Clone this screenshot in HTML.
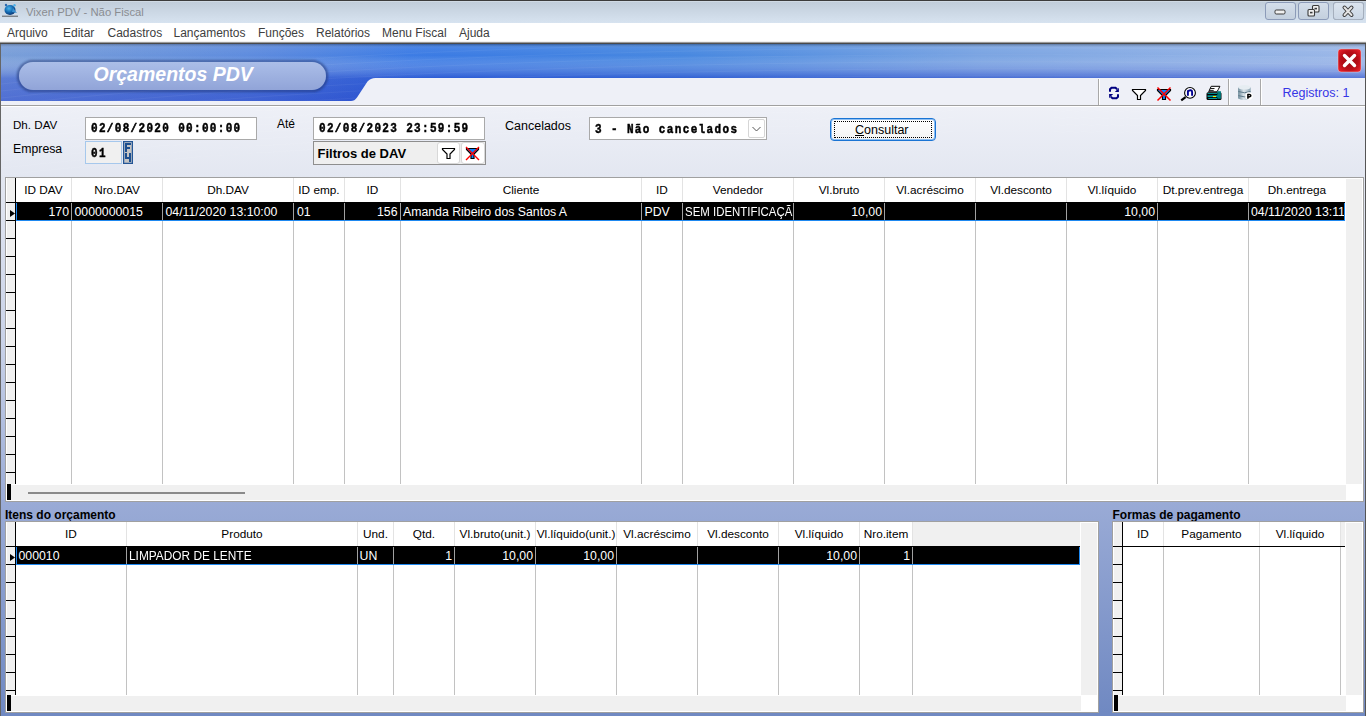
<!DOCTYPE html><html><head><meta charset="utf-8"><style>
html,body{margin:0;padding:0}
body{width:1366px;height:716px;overflow:hidden;position:relative;background:#eef0f7;font-family:"Liberation Sans",sans-serif}
.t{position:absolute;white-space:nowrap}
.b{position:absolute;box-sizing:border-box}
svg{position:absolute;overflow:visible}
</style></head><body>
<div class="b" style="left:0px;top:0px;width:1366px;height:23px;background:linear-gradient(#bfcbd8,#d7e3f0);"></div>
<div class="b" style="left:0px;top:0px;width:1366px;height:1px;background:#3c3c3c;"></div>
<div class="b" style="left:0px;top:1px;width:1366px;height:1px;background:#d0dae4;"></div>
<svg style="left:0;top:0" width="24" height="23" viewBox="0 0 24 23">
<defs><radialGradient id="gl" cx="0.4" cy="0.35" r="0.7"><stop offset="0" stop-color="#4ab4ea"/><stop offset="0.55" stop-color="#1268b0"/><stop offset="1" stop-color="#0a2f6a"/></radialGradient></defs>
<ellipse cx="10" cy="10" rx="5.5" ry="5" fill="url(#gl)"/>
<path d="M13 8 L17 13 L12 12 Z" fill="#3a90d0"/>
<circle cx="6" cy="5" r="1.2" fill="#2a6ab0"/><circle cx="14.5" cy="5.2" r="1.2" fill="#4ab0e8"/>
<rect x="2" y="15.6" width="16" height="1.3" fill="#444" opacity="0.65"/>
</svg>
<div class="t" style="left:26px;top:6.53px;font-size:11.3px;line-height:11.3px;font-weight:normal;font-style:normal;color:#8a8d92;font-family:'Liberation Sans', sans-serif;">Vixen PDV - Não Fiscal</div>
<div class="b" style="left:1265px;top:2px;width:31px;height:18px;border:1px solid #8c9bb8;border-radius:3px;background:linear-gradient(#d4deea,#c4d0de);"></div>
<div class="b" style="left:1298px;top:2px;width:31px;height:18px;border:1px solid #8c9bb8;border-radius:3px;background:linear-gradient(#d4deea,#c4d0de);"></div>
<div class="b" style="left:1333px;top:2px;width:31px;height:18px;border:1px solid #8c9bb8;border-radius:3px;background:linear-gradient(#d4deea,#c4d0de);"></div>
<div class="b" style="left:1333px;top:2px;width:31px;height:18px;border:1px solid #a5afbd;border-radius:3px;background:linear-gradient(#dbe4ee,#cbd7e5);"></div>
<svg style="left:1265px;top:2px" width="100" height="18" viewBox="0 0 100 18">
<rect x="10" y="8" width="10" height="4" rx="1.2" fill="#f0f0f0" stroke="#3a3a3a" stroke-width="1"/>
<rect x="47.5" y="3.5" width="6.5" height="6.5" rx="1" fill="#f0f0f0" stroke="#3a3a3a" stroke-width="1.1"/>
<rect x="49.5" y="5.8" width="2.5" height="1.6" fill="#3a3a3a"/>
<rect x="43" y="7.5" width="6.5" height="6.5" rx="1" fill="#f0f0f0" stroke="#3a3a3a" stroke-width="1.1"/>
<rect x="45" y="9.8" width="2.5" height="1.6" fill="#3a3a3a"/>
<path d="M79.5 5.5 L86.5 13 M86.5 5.5 L79.5 13" stroke="#3a3a3a" stroke-width="4" stroke-linecap="round"/>
<path d="M79.5 5.5 L86.5 13 M86.5 5.5 L79.5 13" stroke="#e4e4e4" stroke-width="2" stroke-linecap="round"/>
</svg>
<div class="b" style="left:0px;top:23px;width:1366px;height:19px;background:#ffffff;"></div>
<div class="b" style="left:0px;top:41px;width:1366px;height:1px;background:#f0f0f0;"></div>
<div class="b" style="left:0px;top:42px;width:1366px;height:1px;background:#9a9a9a;"></div>
<div class="b" style="left:0px;top:43px;width:1366px;height:1px;background:#4a4a4a;"></div>
<div class="t" style="left:7px;top:27.24px;font-size:12px;line-height:12px;font-weight:normal;font-style:normal;color:#404040;font-family:'Liberation Sans', sans-serif;">Arquivo</div>
<div class="t" style="left:63px;top:27.24px;font-size:12px;line-height:12px;font-weight:normal;font-style:normal;color:#404040;font-family:'Liberation Sans', sans-serif;">Editar</div>
<div class="t" style="left:107.5px;top:27.24px;font-size:12px;line-height:12px;font-weight:normal;font-style:normal;color:#404040;font-family:'Liberation Sans', sans-serif;">Cadastros</div>
<div class="t" style="left:173.5px;top:27.24px;font-size:12px;line-height:12px;font-weight:normal;font-style:normal;color:#404040;font-family:'Liberation Sans', sans-serif;">Lançamentos</div>
<div class="t" style="left:258px;top:27.24px;font-size:12px;line-height:12px;font-weight:normal;font-style:normal;color:#404040;font-family:'Liberation Sans', sans-serif;">Funções</div>
<div class="t" style="left:316px;top:27.24px;font-size:12px;line-height:12px;font-weight:normal;font-style:normal;color:#404040;font-family:'Liberation Sans', sans-serif;">Relatórios</div>
<div class="t" style="left:382px;top:27.24px;font-size:12px;line-height:12px;font-weight:normal;font-style:normal;color:#404040;font-family:'Liberation Sans', sans-serif;">Menu Fiscal</div>
<div class="t" style="left:459px;top:27.24px;font-size:12px;line-height:12px;font-weight:normal;font-style:normal;color:#404040;font-family:'Liberation Sans', sans-serif;">Ajuda</div>
<div class="b" style="left:0px;top:44px;width:1366px;height:672px;background:linear-gradient(#eef0f7 0px,#eef0f7 62px,#e3e7f1 133px,#c9d2e8 300px,#9aabd6 457px,#7089c2 668px);"></div>
<div class="b" style="left:0px;top:44px;width:1px;height:672px;background:#666;"></div>
<div class="b" style="left:1365px;top:44px;width:1px;height:672px;background:#555;"></div>
<svg style="left:1px;top:44px" width="1364" height="62" viewBox="0 0 1364 62">
<defs>
<linearGradient id="bh" x1="0" y1="0" x2="1" y2="0">
<stop offset="0" stop-color="#6490d2"/><stop offset="0.2" stop-color="#4a7edc"/><stop offset="0.3" stop-color="#3a7ae4"/><stop offset="0.5" stop-color="#4888e0"/><stop offset="0.72" stop-color="#7aa4e2"/><stop offset="1" stop-color="#9cb8e8"/></linearGradient>
<linearGradient id="bv" x1="0" y1="0" x2="0" y2="1">
<stop offset="0" stop-color="#000" stop-opacity="0.30"/><stop offset="0.07" stop-color="#fff" stop-opacity="0.06"/><stop offset="0.2" stop-color="#fff" stop-opacity="0"/><stop offset="0.6" stop-color="#1c3ec8" stop-opacity="0.55"/><stop offset="1" stop-color="#1c3ec8" stop-opacity="0.75"/></linearGradient>
<linearGradient id="pill" x1="0" y1="0" x2="0" y2="1"><stop offset="0" stop-color="#abbee8"/><stop offset="1" stop-color="#91a4d8"/></linearGradient>
<filter id="sh2" x="-5%" y="-30%" width="110%" height="160%"><feGaussianBlur stdDeviation="0.9"/></filter>
</defs>
<rect x="0" y="0" width="1364" height="57" fill="url(#bh)"/>
<rect x="0" y="0" width="1364" height="57" fill="url(#bv)"/>
<linearGradient id="bl" x1="0" y1="0" x2="1" y2="0"><stop offset="0" stop-color="#c8d4f0" stop-opacity="0.22"/><stop offset="0.18" stop-color="#c8d4f0" stop-opacity="0.15"/><stop offset="0.32" stop-color="#c8d4f0" stop-opacity="0"/></linearGradient>
<rect x="0" y="0" width="1364" height="57" fill="url(#bl)"/>
<path d="M0 40 Q 500 -15 1364 0" stroke="#fff" stroke-opacity="0.05" fill="none" stroke-width="1"/>
<path d="M0 47 Q 500 -8 1364 7" stroke="#fff" stroke-opacity="0.05" fill="none" stroke-width="1"/>
<path d="M0 54 Q 500 -1 1364 14" stroke="#fff" stroke-opacity="0.05" fill="none" stroke-width="1"/>
<path d="M0 61 Q 500 6 1364 21" stroke="#fff" stroke-opacity="0.05" fill="none" stroke-width="1"/>
<path d="M0 68 Q 500 13 1364 28" stroke="#fff" stroke-opacity="0.05" fill="none" stroke-width="1"/>
<path d="M0 75 Q 500 20 1364 35" stroke="#fff" stroke-opacity="0.05" fill="none" stroke-width="1"/>
<path d="M0 82 Q 500 27 1364 42" stroke="#fff" stroke-opacity="0.05" fill="none" stroke-width="1"/>
<path d="M0 89 Q 500 34 1364 49" stroke="#fff" stroke-opacity="0.05" fill="none" stroke-width="1"/>
<path d="M0 96 Q 500 41 1364 56" stroke="#fff" stroke-opacity="0.05" fill="none" stroke-width="1"/>
<path d="M0 103 Q 500 48 1364 63" stroke="#fff" stroke-opacity="0.05" fill="none" stroke-width="1"/>
<path d="M0 110 Q 500 55 1364 70" stroke="#fff" stroke-opacity="0.05" fill="none" stroke-width="1"/>
<path d="M0 117 Q 500 62 1364 77" stroke="#fff" stroke-opacity="0.05" fill="none" stroke-width="1"/>
<path d="M0 124 Q 500 69 1364 84" stroke="#fff" stroke-opacity="0.05" fill="none" stroke-width="1"/>
<path d="M0 131 Q 500 76 1364 91" stroke="#fff" stroke-opacity="0.05" fill="none" stroke-width="1"/>
<rect x="17.2" y="17.2" width="308.6" height="29.6" rx="14.8" fill="none" stroke="#1a3270" stroke-width="2.6" opacity="0.6" filter="url(#sh2)"/>
<rect x="18" y="18" width="307" height="28" rx="14" fill="url(#pill)"/>
<path d="M0 57 L350 57 Q353.5 57 356 53.5 L366.5 37.5 Q369.5 34 374.5 34 L1364 34 L1364 62 L0 62 Z" fill="#eef0f7"/>
</svg>
<div class="t" style="left:93.5px;top:65.09px;font-size:19.5px;line-height:19.5px;font-weight:bold;font-style:italic;color:#ffffff;font-family:'Liberation Sans', sans-serif;">Orçamentos PDV</div>
<svg style="left:1338px;top:49px" width="23" height="23" viewBox="0 0 23 23">
<defs><radialGradient id="rg" cx="0.5" cy="0.5" r="0.62"><stop offset="0" stop-color="#9a0a12"/><stop offset="0.6" stop-color="#b80e18"/><stop offset="1" stop-color="#e8202a"/></radialGradient></defs>
<rect x="0" y="0" width="23" height="23" rx="3" fill="url(#rg)" stroke="#f0d0d0" stroke-opacity="0.6" stroke-width="0.8"/>
<path d="M6.5 6.5 L16.5 16.5 M16.5 6.5 L6.5 16.5" stroke="#fff" stroke-width="3.4" stroke-linecap="round"/>
</svg>
<div class="b" style="left:1px;top:105px;width:1364px;height:1px;background:#a0a0a0;"></div>
<div class="b" style="left:1px;top:106px;width:1364px;height:1px;background:#ffffff;"></div>
<div class="b" style="left:1098px;top:79px;width:1px;height:26px;background:#a8a8a8;"></div>
<div class="b" style="left:1099px;top:79px;width:1px;height:26px;background:#ffffff;"></div>
<div class="b" style="left:1228px;top:79px;width:1px;height:26px;background:#a8a8a8;"></div>
<div class="b" style="left:1229px;top:79px;width:1px;height:26px;background:#ffffff;"></div>
<div class="b" style="left:1260px;top:79px;width:1px;height:26px;background:#a8a8a8;"></div>
<div class="b" style="left:1261px;top:79px;width:1px;height:26px;background:#ffffff;"></div>
<svg style="left:1100px;top:80px" width="160" height="24" viewBox="0 0 160 24">
<polyline points="10,11.8 10,9.2 11.5,7.7 15.5,7.7 17.2,9.2" fill="none" stroke="#000080" stroke-width="2"/>
<polygon points="18.9,7.8 18.9,11.9 14.9,11.9" fill="#000080"/>
<polyline points="18,14.2 18,16.8 16.5,18.3 12.5,18.3 10.8,16.8" fill="none" stroke="#000080" stroke-width="2"/>
<polygon points="9.1,18.2 9.1,14.1 13.1,14.1" fill="#000080"/>
<path d="M32.5 9.5 L45.5 9.5 L45.5 10.5 L40.5 15.5 L40.5 19.5 L37.5 19.5 L37.5 15.5 L32.5 10.5 Z" fill="#fff" stroke="#000" stroke-width="1.2"/>
<path d="M57.5 9.5 L70.5 9.5 L70.5 10.5 L65.5 15.5 L65.5 19.5 L62.5 19.5 L62.5 15.5 L57.5 10.5 Z" fill="#0a84ff" stroke="#000" stroke-width="1.2"/>
<path d="M57.5 7.5 L70.5 20.5 M70.5 7.5 L57.5 20.5" stroke="#ff0000" stroke-width="1.5"/>
<circle cx="90" cy="12.9" r="5.4" fill="#fff" stroke="#000" stroke-width="1.1"/>
<path d="M87.9 15.8 L87.9 10.2 M87.9 11.5 Q89 10 90.8 10.2 Q92.1 10.4 92.1 12 L92.1 15.8" fill="none" stroke="#000090" stroke-width="1.9"/>
<path d="M85.6 17.1 L81.2 20.4" stroke="#000" stroke-width="2.2"/>
<g transform="translate(100,0)"><rect x="6.5" y="12.2" width="15" height="7.8" rx="1.5" fill="#000"/>
<polygon points="11.2,6.3 19.9,6.3 18.3,9.5 17,11.8 8.7,11.8" fill="#fff" stroke="#000" stroke-width="1"/>
<path d="M10.3 8.5 L14.5 8.5 M9.5 10.4 L13.7 10.4" stroke="#000" stroke-width="0.9"/>
<rect x="7.5" y="13" width="9.5" height="0.9" fill="#009a9a"/>
<rect x="7.5" y="15.3" width="10.5" height="1.8" fill="#009a9a"/>
<rect x="8.3" y="18" width="8.7" height="1" fill="#009a9a"/>
<rect x="17.3" y="11.2" width="3.6" height="7.6" fill="#007a7a"/>
<rect x="12.9" y="16" width="3.1" height="1.1" fill="#ffee00"/>
<defs><linearGradient id="dbg" x1="0" y1="0" x2="1" y2="0"><stop offset="0" stop-color="#6f8c9c"/><stop offset="0.45" stop-color="#dbe4ea"/><stop offset="1" stop-color="#8ea6b4"/></linearGradient></defs>
<path d="M38.1 7.3 L38.1 18.5 Q44.4 21.6 50.7 18.5 L50.7 7.3 Z" fill="url(#dbg)"/>
<ellipse cx="44.4" cy="7.3" rx="6.3" ry="2.3" fill="#e6edf2"/>
<path d="M38.3 11.5 Q44.4 14 50.5 11.5 M38.3 15.6 Q44.4 18.1 50.5 15.6" stroke="#5d7888" stroke-width="1" fill="none"/>
<circle cx="49" cy="16.1" r="3.8" fill="#fff"/>
<path d="M47.9 18.8 L47.9 14.6 Q50.6 14.1 50.8 15.6 Q50.8 17 48.5 17" fill="none" stroke="#000" stroke-width="1.5"/></g>
</svg>
<div class="t" style="left:1282.5px;top:87.18px;font-size:12.55px;line-height:12.55px;font-weight:normal;font-style:normal;color:#3535e6;font-family:'Liberation Sans', sans-serif;">Registros: 1</div>
<div class="t" style="left:13px;top:119.28px;font-size:11.6px;line-height:11.6px;font-weight:normal;font-style:normal;color:#000;font-family:'Liberation Sans', sans-serif;">Dh. DAV</div>
<div class="t" style="left:13px;top:142.79px;font-size:12.3px;line-height:12.3px;font-weight:normal;font-style:normal;color:#000;font-family:'Liberation Sans', sans-serif;">Empresa</div>
<div class="t" style="left:277px;top:118.44px;font-size:12px;line-height:12px;font-weight:normal;font-style:normal;color:#000;font-family:'Liberation Sans', sans-serif;">Até</div>
<div class="t" style="left:505px;top:120.22px;font-size:12.5px;line-height:12.5px;font-weight:normal;font-style:normal;color:#000;font-family:'Liberation Sans', sans-serif;">Cancelados</div>
<div class="b" style="left:85px;top:117px;width:172px;height:23px;background:#fff;border:1px solid #a9a9a9;"></div>
<div class="t" style="left:91px;top:124.47px;font-size:11px;line-height:11px;font-weight:bold;font-family:'Liberation Mono',monospace;letter-spacing:1.320px;transform:scaleY(1.24);transform-origin:0 8.43px;color:#000;-webkit-text-stroke:0.4px #000">02/08/2020 00:00:00</div>
<div class="b" style="left:313px;top:117px;width:172px;height:23px;background:#fff;border:1px solid #a9a9a9;"></div>
<div class="t" style="left:319px;top:124.47px;font-size:11px;line-height:11px;font-weight:bold;font-family:'Liberation Mono',monospace;letter-spacing:1.320px;transform:scaleY(1.24);transform-origin:0 8.43px;color:#000;-webkit-text-stroke:0.4px #000">02/08/2023 23:59:59</div>
<div class="b" style="left:85px;top:141px;width:37px;height:23px;background:#f0f0f0;border:1px solid #a6c8ec;"></div>
<div class="t" style="left:91px;top:148.77px;font-size:11px;line-height:11px;font-weight:bold;font-family:'Liberation Mono',monospace;letter-spacing:1.320px;transform:scaleY(1.24);transform-origin:0 8.43px;color:#000;-webkit-text-stroke:0.4px #000">01</div>
<div class="b" style="left:123px;top:141px;width:10px;height:23px;background:#c8c8c8;border:1px solid #1a4a8a;"></div>
<svg style="left:123px;top:141px" width="10" height="23" viewBox="0 0 10 23"><rect x="0.5" y="0.5" width="9" height="22" fill="#c4c4c4" stroke="#1c4f8f"/><rect x="1" y="1" width="8" height="21" fill="none" stroke="#3a6aa8" stroke-width="0.6"/><path d="M2 2 H8 V4 H4 V6 H7 V8 H4 V11 H2 Z" fill="#1c4f8f"/><path d="M2 12 H4 V16 H6 V12 H8 V21 H6 V18 H2 Z" fill="#1c4f8f"/></svg>
<div class="b" style="left:313px;top:141px;width:173px;height:24px;background:#efefef;border:1px solid #8e8e8e;"></div>
<div class="t" style="left:317.5px;top:147.00px;font-size:13px;line-height:13px;font-weight:bold;font-style:normal;color:#000;font-family:'Liberation Sans', sans-serif;">Filtros de DAV</div>
<div class="b" style="left:437px;top:142px;width:23px;height:22px;background:#fff;border:1px solid #d8d8d8;border-radius:3px;"></div>
<div class="b" style="left:461px;top:142px;width:24px;height:22px;background:#fff;border:1px solid #d8d8d8;border-radius:3px;"></div>
<svg style="left:437px;top:142px" width="48" height="22" viewBox="0 0 48 22">
<path d="M5.5 6.5 L17.5 6.5 L17.5 7.5 L13 12 L13 16.5 L10 16.5 L10 12 L5.5 7.5 Z" fill="#fff" stroke="#000" stroke-width="1.2"/>
<path d="M29.5 6.5 L41.5 6.5 L41.5 7.5 L37 12 L37 16.5 L34 16.5 L34 12 L29.5 7.5 Z" fill="#0a84ff" stroke="#000" stroke-width="1.2"/>
<path d="M29 5 L42 18 M42 5 L29 18" stroke="#ff0000" stroke-width="1.4"/>
</svg>
<div class="b" style="left:589px;top:117px;width:178px;height:23px;background:#fff;border:1px solid #a9a9a9;"></div>
<div class="t" style="left:595px;top:125.17px;font-size:11px;line-height:11px;font-weight:bold;font-family:'Liberation Mono',monospace;letter-spacing:1.370px;transform:scaleY(1.24);transform-origin:0 8.43px;color:#000;-webkit-text-stroke:0.4px #000">3 - Não cancelados</div>
<div class="b" style="left:748px;top:119px;width:17px;height:19px;background:#fff;border:1px solid #d6d6d6;border-radius:2px;"></div>
<svg style="left:748px;top:119px" width="17" height="19" viewBox="0 0 17 19"><path d="M4.5 8 L8.5 12 L12.5 8" fill="none" stroke="#555" stroke-width="1"/></svg>
<div class="b" style="left:830px;top:118px;width:106px;height:23px;background:linear-gradient(#ffffff,#f4f4f4);border:1px solid #1a74d4;border-radius:4px;box-shadow:inset 0 0 0 1px rgba(70,150,235,0.6);"></div>
<div class="b" style="left:834px;top:121px;width:98px;height:17px;border:1px dotted #000;"></div>
<div class="t" style="left:855px;top:124.22px;font-size:12.5px;line-height:12.5px;font-weight:normal;font-style:normal;color:#000;font-family:'Liberation Sans', sans-serif;"><u>C</u>onsultar</div>
<div class="b" style="left:5px;top:177px;width:1359px;height:325px;background:#fff;border:1px solid #a0a0a0;"></div>
<div class="b" style="left:6px;top:178px;width:1px;height:306px;background:#fff;"></div>
<div class="b" style="left:7px;top:178px;width:8px;height:306px;background:#f0f0f0;"></div>
<div class="b" style="left:15px;top:178px;width:1px;height:306px;background:#000;"></div>
<div class="b" style="left:6px;top:202px;width:10px;height:1px;background:#000;"></div>
<div class="b" style="left:6px;top:220px;width:10px;height:1px;background:#000;"></div>
<div class="b" style="left:6px;top:238px;width:10px;height:1px;background:#000;"></div>
<div class="b" style="left:6px;top:256px;width:10px;height:1px;background:#000;"></div>
<div class="b" style="left:6px;top:274px;width:10px;height:1px;background:#000;"></div>
<div class="b" style="left:6px;top:292px;width:10px;height:1px;background:#000;"></div>
<div class="b" style="left:6px;top:310px;width:10px;height:1px;background:#000;"></div>
<div class="b" style="left:6px;top:328px;width:10px;height:1px;background:#000;"></div>
<div class="b" style="left:6px;top:346px;width:10px;height:1px;background:#000;"></div>
<div class="b" style="left:6px;top:364px;width:10px;height:1px;background:#000;"></div>
<div class="b" style="left:6px;top:382px;width:10px;height:1px;background:#000;"></div>
<div class="b" style="left:6px;top:400px;width:10px;height:1px;background:#000;"></div>
<div class="b" style="left:6px;top:418px;width:10px;height:1px;background:#000;"></div>
<div class="b" style="left:6px;top:436px;width:10px;height:1px;background:#000;"></div>
<div class="b" style="left:6px;top:454px;width:10px;height:1px;background:#000;"></div>
<div class="b" style="left:6px;top:472px;width:10px;height:1px;background:#000;"></div>
<div class="b" style="left:71px;top:178px;width:1px;height:24px;background:#e3e3e3;"></div>
<div class="b" style="left:71px;top:202px;width:1px;height:282px;background:#c2c2c2;"></div>
<div class="b" style="left:162px;top:178px;width:1px;height:24px;background:#e3e3e3;"></div>
<div class="b" style="left:162px;top:202px;width:1px;height:282px;background:#c2c2c2;"></div>
<div class="b" style="left:293px;top:178px;width:1px;height:24px;background:#e3e3e3;"></div>
<div class="b" style="left:293px;top:202px;width:1px;height:282px;background:#c2c2c2;"></div>
<div class="b" style="left:344px;top:178px;width:1px;height:24px;background:#e3e3e3;"></div>
<div class="b" style="left:344px;top:202px;width:1px;height:282px;background:#c2c2c2;"></div>
<div class="b" style="left:400px;top:178px;width:1px;height:24px;background:#e3e3e3;"></div>
<div class="b" style="left:400px;top:202px;width:1px;height:282px;background:#c2c2c2;"></div>
<div class="b" style="left:641px;top:178px;width:1px;height:24px;background:#e3e3e3;"></div>
<div class="b" style="left:641px;top:202px;width:1px;height:282px;background:#c2c2c2;"></div>
<div class="b" style="left:682px;top:178px;width:1px;height:24px;background:#e3e3e3;"></div>
<div class="b" style="left:682px;top:202px;width:1px;height:282px;background:#c2c2c2;"></div>
<div class="b" style="left:793px;top:178px;width:1px;height:24px;background:#e3e3e3;"></div>
<div class="b" style="left:793px;top:202px;width:1px;height:282px;background:#c2c2c2;"></div>
<div class="b" style="left:884px;top:178px;width:1px;height:24px;background:#e3e3e3;"></div>
<div class="b" style="left:884px;top:202px;width:1px;height:282px;background:#c2c2c2;"></div>
<div class="b" style="left:975px;top:178px;width:1px;height:24px;background:#e3e3e3;"></div>
<div class="b" style="left:975px;top:202px;width:1px;height:282px;background:#c2c2c2;"></div>
<div class="b" style="left:1066px;top:178px;width:1px;height:24px;background:#e3e3e3;"></div>
<div class="b" style="left:1066px;top:202px;width:1px;height:282px;background:#c2c2c2;"></div>
<div class="b" style="left:1157px;top:178px;width:1px;height:24px;background:#e3e3e3;"></div>
<div class="b" style="left:1157px;top:202px;width:1px;height:282px;background:#c2c2c2;"></div>
<div class="b" style="left:1248px;top:178px;width:1px;height:24px;background:#e3e3e3;"></div>
<div class="b" style="left:1248px;top:202px;width:1px;height:282px;background:#c2c2c2;"></div>
<div class="t" style="left:16px;width:55px;top:184.51px;font-size:11.8px;line-height:11.8px;font-weight:normal;color:#000;text-align:center">ID DAV</div>
<div class="t" style="left:72px;width:90px;top:184.51px;font-size:11.8px;line-height:11.8px;font-weight:normal;color:#000;text-align:center">Nro.DAV</div>
<div class="t" style="left:163px;width:130px;top:184.51px;font-size:11.8px;line-height:11.8px;font-weight:normal;color:#000;text-align:center">Dh.DAV</div>
<div class="t" style="left:294px;width:50px;top:184.51px;font-size:11.8px;line-height:11.8px;font-weight:normal;color:#000;text-align:center">ID emp.</div>
<div class="t" style="left:345px;width:55px;top:184.51px;font-size:11.8px;line-height:11.8px;font-weight:normal;color:#000;text-align:center">ID</div>
<div class="t" style="left:401px;width:240px;top:184.51px;font-size:11.8px;line-height:11.8px;font-weight:normal;color:#000;text-align:center">Cliente</div>
<div class="t" style="left:642px;width:40px;top:184.51px;font-size:11.8px;line-height:11.8px;font-weight:normal;color:#000;text-align:center">ID</div>
<div class="t" style="left:683px;width:110px;top:184.51px;font-size:11.8px;line-height:11.8px;font-weight:normal;color:#000;text-align:center">Vendedor</div>
<div class="t" style="left:794px;width:90px;top:184.51px;font-size:11.8px;line-height:11.8px;font-weight:normal;color:#000;text-align:center">Vl.bruto</div>
<div class="t" style="left:885px;width:90px;top:184.51px;font-size:11.8px;line-height:11.8px;font-weight:normal;color:#000;text-align:center">Vl.acréscimo</div>
<div class="t" style="left:976px;width:90px;top:184.51px;font-size:11.8px;line-height:11.8px;font-weight:normal;color:#000;text-align:center">Vl.desconto</div>
<div class="t" style="left:1067px;width:90px;top:184.51px;font-size:11.8px;line-height:11.8px;font-weight:normal;color:#000;text-align:center">Vl.líquido</div>
<div class="t" style="left:1158px;width:90px;top:184.51px;font-size:11.8px;line-height:11.8px;font-weight:normal;color:#000;text-align:center">Dt.prev.entrega</div>
<div class="t" style="left:1249px;width:96px;top:184.51px;font-size:11.8px;line-height:11.8px;font-weight:normal;color:#000;text-align:center">Dh.entrega</div>
<div class="b" style="left:1346px;top:179px;width:16px;height:305px;background:#f0f0f0;"></div>
<div class="b" style="left:7px;top:485px;width:1339px;height:15px;background:#f0f0f0;"></div>
<div class="b" style="left:7px;top:484px;width:4px;height:16px;background:#000;"></div>
<div class="b" style="left:28px;top:492px;width:217px;height:2px;background:#8a8a8a;"></div>
<div class="b" style="left:15px;top:202px;width:1330px;height:18px;background:#000;"></div>
<div class="b" style="left:16px;top:220px;width:1329px;height:1px;background:#1e88f0;"></div>
<div class="b" style="left:16px;top:203px;width:1px;height:18px;background:#1e88f0;"></div>
<div class="b" style="left:1344px;top:203px;width:1px;height:18px;background:#1e88f0;"></div>
<div class="t" style="right:1297px;top:206.29px;font-size:12.3px;line-height:12.3px;font-weight:normal;color:#fff;text-align:right">170</div>
<div class="t" style="left:74.5px;top:206.29px;font-size:12.3px;line-height:12.3px;font-weight:normal;font-style:normal;color:#fff;font-family:'Liberation Sans', sans-serif;">0000000015</div>
<div class="t" style="left:165.5px;top:206.29px;font-size:12.3px;line-height:12.3px;font-weight:normal;font-style:normal;color:#fff;font-family:'Liberation Sans', sans-serif;">04/11/2020 13:10:00</div>
<div class="t" style="left:297px;top:206.29px;font-size:12.3px;line-height:12.3px;font-weight:normal;font-style:normal;color:#fff;font-family:'Liberation Sans', sans-serif;">01</div>
<div class="t" style="right:968.5px;top:206.29px;font-size:12.3px;line-height:12.3px;font-weight:normal;color:#fff;text-align:right">156</div>
<div class="t" style="left:403px;top:206.29px;font-size:12.3px;line-height:12.3px;font-weight:normal;font-style:normal;color:#fff;font-family:'Liberation Sans', sans-serif;">Amanda Ribeiro dos Santos A</div>
<div class="t" style="left:644.5px;top:206.29px;font-size:12.3px;line-height:12.3px;font-weight:normal;font-style:normal;color:#fff;font-family:'Liberation Sans', sans-serif;">PDV</div>
<div class="t" style="left:685px;top:202.29px;padding-top:4px;height:16.3px;width:108px;overflow:hidden;font-size:12.3px;line-height:12.3px;color:#fff"><span style="display:inline-block;transform:scaleX(0.93);transform-origin:0 0">SEM IDENTIFICAÇÃO</span></div>
<div class="t" style="right:484px;top:206.29px;font-size:12.3px;line-height:12.3px;font-weight:normal;color:#fff;text-align:right">10,00</div>
<div class="t" style="right:211px;top:206.29px;font-size:12.3px;line-height:12.3px;font-weight:normal;color:#fff;text-align:right">10,00</div>
<div class="t" style="left:1251px;top:202.29px;padding-top:4px;height:16.3px;width:93px;overflow:hidden;font-size:12.3px;line-height:12.3px;color:#fff"><span style="display:inline-block;transform:scaleX(1);transform-origin:0 0">04/11/2020 13:11:00</span></div>
<div class="b" style="left:71px;top:203px;width:1px;height:17px;background:#a0a0a0;"></div>
<div class="b" style="left:162px;top:203px;width:1px;height:17px;background:#a0a0a0;"></div>
<div class="b" style="left:293px;top:203px;width:1px;height:17px;background:#a0a0a0;"></div>
<div class="b" style="left:344px;top:203px;width:1px;height:17px;background:#a0a0a0;"></div>
<div class="b" style="left:400px;top:203px;width:1px;height:17px;background:#a0a0a0;"></div>
<div class="b" style="left:641px;top:203px;width:1px;height:17px;background:#a0a0a0;"></div>
<div class="b" style="left:682px;top:203px;width:1px;height:17px;background:#a0a0a0;"></div>
<div class="b" style="left:793px;top:203px;width:1px;height:17px;background:#a0a0a0;"></div>
<div class="b" style="left:884px;top:203px;width:1px;height:17px;background:#a0a0a0;"></div>
<div class="b" style="left:975px;top:203px;width:1px;height:17px;background:#a0a0a0;"></div>
<div class="b" style="left:1066px;top:203px;width:1px;height:17px;background:#a0a0a0;"></div>
<div class="b" style="left:1157px;top:203px;width:1px;height:17px;background:#a0a0a0;"></div>
<div class="b" style="left:1248px;top:203px;width:1px;height:17px;background:#a0a0a0;"></div>
<svg style="left:6px;top:203px" width="9" height="17" viewBox="0 0 9 17"><path d="M4 7 L9 10.5 L4 14 Z" fill="#000"/></svg>
<div class="t" style="left:5px;top:509.04px;font-size:12px;line-height:12px;font-weight:bold;font-style:normal;color:#000;font-family:'Liberation Sans', sans-serif;">Itens do orçamento</div>
<div class="t" style="left:1112.5px;top:508.84px;font-size:12px;line-height:12px;font-weight:bold;font-style:normal;color:#000;font-family:'Liberation Sans', sans-serif;">Formas de pagamento</div>
<div class="b" style="left:5px;top:521px;width:1094px;height:192px;background:#fff;border:1px solid #a0a0a0;"></div>
<div class="b" style="left:6px;top:522px;width:1px;height:173px;background:#fff;"></div>
<div class="b" style="left:7px;top:522px;width:8px;height:173px;background:#f0f0f0;"></div>
<div class="b" style="left:15px;top:522px;width:1px;height:173px;background:#000;"></div>
<div class="b" style="left:6px;top:546px;width:10px;height:1px;background:#000;"></div>
<div class="b" style="left:6px;top:564px;width:10px;height:1px;background:#000;"></div>
<div class="b" style="left:6px;top:582px;width:10px;height:1px;background:#000;"></div>
<div class="b" style="left:6px;top:600px;width:10px;height:1px;background:#000;"></div>
<div class="b" style="left:6px;top:618px;width:10px;height:1px;background:#000;"></div>
<div class="b" style="left:6px;top:636px;width:10px;height:1px;background:#000;"></div>
<div class="b" style="left:6px;top:654px;width:10px;height:1px;background:#000;"></div>
<div class="b" style="left:6px;top:672px;width:10px;height:1px;background:#000;"></div>
<div class="b" style="left:6px;top:690px;width:10px;height:1px;background:#000;"></div>
<div class="b" style="left:126px;top:522px;width:1px;height:24px;background:#e3e3e3;"></div>
<div class="b" style="left:126px;top:546px;width:1px;height:149px;background:#c2c2c2;"></div>
<div class="b" style="left:357px;top:522px;width:1px;height:24px;background:#e3e3e3;"></div>
<div class="b" style="left:357px;top:546px;width:1px;height:149px;background:#c2c2c2;"></div>
<div class="b" style="left:393px;top:522px;width:1px;height:24px;background:#e3e3e3;"></div>
<div class="b" style="left:393px;top:546px;width:1px;height:149px;background:#c2c2c2;"></div>
<div class="b" style="left:454px;top:522px;width:1px;height:24px;background:#e3e3e3;"></div>
<div class="b" style="left:454px;top:546px;width:1px;height:149px;background:#c2c2c2;"></div>
<div class="b" style="left:535px;top:522px;width:1px;height:24px;background:#e3e3e3;"></div>
<div class="b" style="left:535px;top:546px;width:1px;height:149px;background:#c2c2c2;"></div>
<div class="b" style="left:616px;top:522px;width:1px;height:24px;background:#e3e3e3;"></div>
<div class="b" style="left:616px;top:546px;width:1px;height:149px;background:#c2c2c2;"></div>
<div class="b" style="left:697px;top:522px;width:1px;height:24px;background:#e3e3e3;"></div>
<div class="b" style="left:697px;top:546px;width:1px;height:149px;background:#c2c2c2;"></div>
<div class="b" style="left:778px;top:522px;width:1px;height:24px;background:#e3e3e3;"></div>
<div class="b" style="left:778px;top:546px;width:1px;height:149px;background:#c2c2c2;"></div>
<div class="b" style="left:859px;top:522px;width:1px;height:24px;background:#e3e3e3;"></div>
<div class="b" style="left:859px;top:546px;width:1px;height:149px;background:#c2c2c2;"></div>
<div class="b" style="left:912px;top:522px;width:1px;height:24px;background:#e3e3e3;"></div>
<div class="b" style="left:912px;top:546px;width:1px;height:149px;background:#c2c2c2;"></div>
<div class="b" style="left:913px;top:522px;width:167px;height:24px;background:#f0f0f0;"></div>
<div class="t" style="left:16px;width:110px;top:528.51px;font-size:11.8px;line-height:11.8px;font-weight:normal;color:#000;text-align:center">ID</div>
<div class="t" style="left:127px;width:230px;top:528.51px;font-size:11.8px;line-height:11.8px;font-weight:normal;color:#000;text-align:center">Produto</div>
<div class="t" style="left:358px;width:35px;top:528.51px;font-size:11.8px;line-height:11.8px;font-weight:normal;color:#000;text-align:center">Und.</div>
<div class="t" style="left:394px;width:60px;top:528.51px;font-size:11.8px;line-height:11.8px;font-weight:normal;color:#000;text-align:center">Qtd.</div>
<div class="t" style="left:455px;width:80px;top:528.51px;font-size:11.8px;line-height:11.8px;font-weight:normal;color:#000;text-align:center">Vl.bruto(unit.)</div>
<div class="t" style="left:536px;width:80px;top:528.51px;font-size:11.8px;line-height:11.8px;font-weight:normal;color:#000;text-align:center">Vl.líquido(unit.)</div>
<div class="t" style="left:617px;width:80px;top:528.51px;font-size:11.8px;line-height:11.8px;font-weight:normal;color:#000;text-align:center">Vl.acréscimo</div>
<div class="t" style="left:698px;width:80px;top:528.51px;font-size:11.8px;line-height:11.8px;font-weight:normal;color:#000;text-align:center">Vl.desconto</div>
<div class="t" style="left:779px;width:80px;top:528.51px;font-size:11.8px;line-height:11.8px;font-weight:normal;color:#000;text-align:center">Vl.líquido</div>
<div class="t" style="left:860px;width:52px;top:528.51px;font-size:11.8px;line-height:11.8px;font-weight:normal;color:#000;text-align:center">Nro.item</div>
<div class="b" style="left:1081px;top:523px;width:16px;height:172px;background:#f0f0f0;"></div>
<div class="b" style="left:7px;top:696px;width:1074px;height:15px;background:#f0f0f0;"></div>
<div class="b" style="left:7px;top:695px;width:4px;height:16px;background:#000;"></div>
<div class="b" style="left:15px;top:546px;width:1065px;height:18px;background:#000;"></div>
<div class="b" style="left:16px;top:564px;width:1064px;height:1px;background:#1e88f0;"></div>
<div class="b" style="left:16px;top:547px;width:1px;height:18px;background:#1e88f0;"></div>
<div class="b" style="left:1079px;top:547px;width:1px;height:18px;background:#1e88f0;"></div>
<div class="t" style="left:18.5px;top:550.29px;font-size:12.3px;line-height:12.3px;font-weight:normal;font-style:normal;color:#fff;font-family:'Liberation Sans', sans-serif;">000010</div>
<div class="t" style="left:128.5px;top:546.29px;padding-top:4px;height:16.3px;width:950.5px;overflow:hidden;font-size:12.3px;line-height:12.3px;color:#fff"><span style="display:inline-block;transform:scaleX(0.966);transform-origin:0 0">LIMPADOR DE LENTE</span></div>
<div class="t" style="left:359.5px;top:550.29px;font-size:12.3px;line-height:12.3px;font-weight:normal;font-style:normal;color:#fff;font-family:'Liberation Sans', sans-serif;">UN</div>
<div class="t" style="right:914px;top:550.29px;font-size:12.3px;line-height:12.3px;font-weight:normal;color:#fff;text-align:right">1</div>
<div class="t" style="right:833px;top:550.29px;font-size:12.3px;line-height:12.3px;font-weight:normal;color:#fff;text-align:right">10,00</div>
<div class="t" style="right:752px;top:550.29px;font-size:12.3px;line-height:12.3px;font-weight:normal;color:#fff;text-align:right">10,00</div>
<div class="t" style="right:509px;top:550.29px;font-size:12.3px;line-height:12.3px;font-weight:normal;color:#fff;text-align:right">10,00</div>
<div class="t" style="right:456px;top:550.29px;font-size:12.3px;line-height:12.3px;font-weight:normal;color:#fff;text-align:right">1</div>
<div class="b" style="left:126px;top:547px;width:1px;height:17px;background:#a0a0a0;"></div>
<div class="b" style="left:357px;top:547px;width:1px;height:17px;background:#a0a0a0;"></div>
<div class="b" style="left:393px;top:547px;width:1px;height:17px;background:#a0a0a0;"></div>
<div class="b" style="left:454px;top:547px;width:1px;height:17px;background:#a0a0a0;"></div>
<div class="b" style="left:535px;top:547px;width:1px;height:17px;background:#a0a0a0;"></div>
<div class="b" style="left:616px;top:547px;width:1px;height:17px;background:#a0a0a0;"></div>
<div class="b" style="left:697px;top:547px;width:1px;height:17px;background:#a0a0a0;"></div>
<div class="b" style="left:778px;top:547px;width:1px;height:17px;background:#a0a0a0;"></div>
<div class="b" style="left:859px;top:547px;width:1px;height:17px;background:#a0a0a0;"></div>
<div class="b" style="left:912px;top:547px;width:1px;height:17px;background:#a0a0a0;"></div>
<svg style="left:6px;top:547px" width="9" height="17" viewBox="0 0 9 17"><path d="M4 7 L9 10.5 L4 14 Z" fill="#000"/></svg>
<div class="b" style="left:1112px;top:521px;width:252px;height:192px;background:#fff;border:1px solid #a0a0a0;"></div>
<div class="b" style="left:1113px;top:522px;width:1px;height:173px;background:#fff;"></div>
<div class="b" style="left:1114px;top:522px;width:8px;height:173px;background:#f0f0f0;"></div>
<div class="b" style="left:1122px;top:522px;width:1px;height:173px;background:#000;"></div>
<div class="b" style="left:1113px;top:546px;width:10px;height:1px;background:#000;"></div>
<div class="b" style="left:1113px;top:564px;width:10px;height:1px;background:#000;"></div>
<div class="b" style="left:1113px;top:582px;width:10px;height:1px;background:#000;"></div>
<div class="b" style="left:1113px;top:600px;width:10px;height:1px;background:#000;"></div>
<div class="b" style="left:1113px;top:618px;width:10px;height:1px;background:#000;"></div>
<div class="b" style="left:1113px;top:636px;width:10px;height:1px;background:#000;"></div>
<div class="b" style="left:1113px;top:654px;width:10px;height:1px;background:#000;"></div>
<div class="b" style="left:1113px;top:672px;width:10px;height:1px;background:#000;"></div>
<div class="b" style="left:1113px;top:690px;width:10px;height:1px;background:#000;"></div>
<div class="b" style="left:1163px;top:522px;width:1px;height:24px;background:#e3e3e3;"></div>
<div class="b" style="left:1163px;top:546px;width:1px;height:149px;background:#c2c2c2;"></div>
<div class="b" style="left:1259px;top:522px;width:1px;height:24px;background:#e3e3e3;"></div>
<div class="b" style="left:1259px;top:546px;width:1px;height:149px;background:#c2c2c2;"></div>
<div class="b" style="left:1340px;top:522px;width:1px;height:24px;background:#e3e3e3;"></div>
<div class="b" style="left:1340px;top:546px;width:1px;height:149px;background:#c2c2c2;"></div>
<div class="b" style="left:1341px;top:522px;width:4px;height:24px;background:#f0f0f0;"></div>
<div class="t" style="left:1123px;width:40px;top:528.51px;font-size:11.8px;line-height:11.8px;font-weight:normal;color:#000;text-align:center">ID</div>
<div class="t" style="left:1164px;width:95px;top:528.51px;font-size:11.8px;line-height:11.8px;font-weight:normal;color:#000;text-align:center">Pagamento</div>
<div class="t" style="left:1260px;width:80px;top:528.51px;font-size:11.8px;line-height:11.8px;font-weight:normal;color:#000;text-align:center">Vl.líquido</div>
<div class="b" style="left:1346px;top:523px;width:16px;height:172px;background:#f0f0f0;"></div>
<div class="b" style="left:1114px;top:696px;width:232px;height:15px;background:#f0f0f0;"></div>
<div class="b" style="left:1114px;top:695px;width:4px;height:16px;background:#000;"></div>
<div class="b" style="left:1122px;top:546px;width:223px;height:1px;background:#000;"></div>
</body></html>
